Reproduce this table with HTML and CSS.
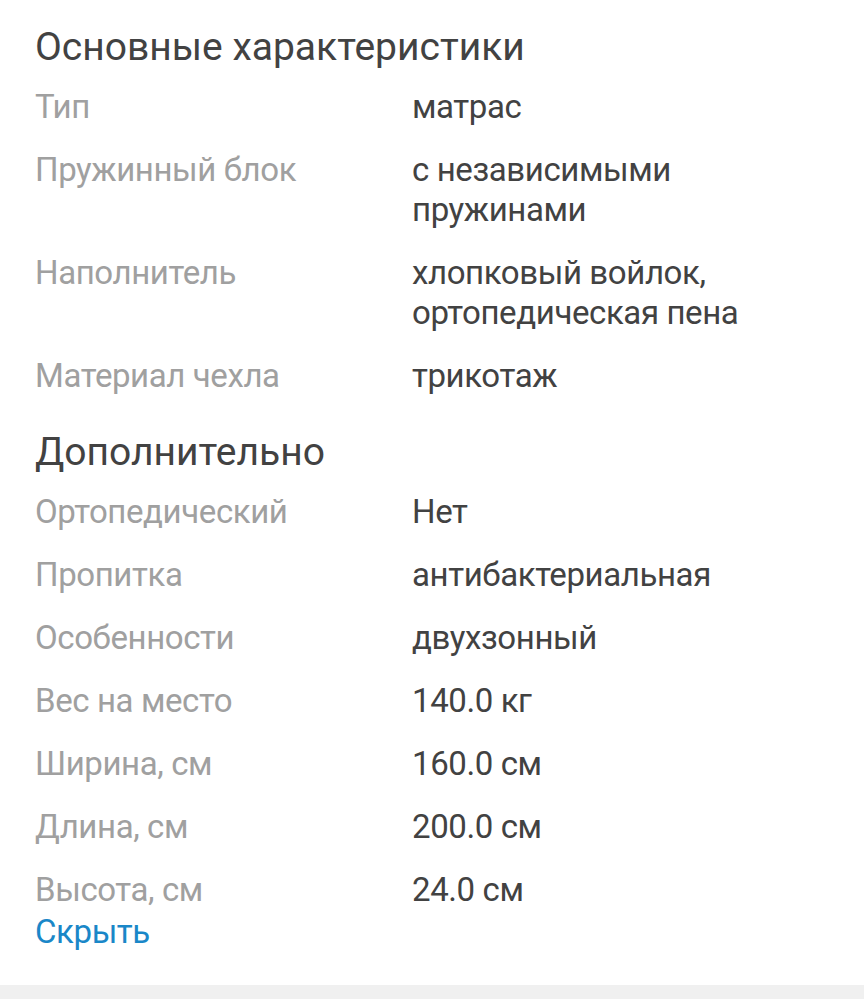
FILE: index.html
```html
<!DOCTYPE html>
<html lang="ru">
<head>
<meta charset="utf-8">
<link rel="stylesheet" href="styles.css">
</head>
<body>
<div class="page">
  <div class="specs">
    <h2 class="title">Основные характеристики</h2>
    <dl class="grid">
      <dt>Тип</dt><dd>матрас</dd>
      <dt>Пружинный блок</dt><dd>с независимыми пружинами</dd>
      <dt>Наполнитель</dt><dd>хлопковый войлок, ортопедическая пена</dd>
      <dt>Материал чехла</dt><dd>трикотаж</dd>
    </dl>
    <h2 class="title second">Дополнительно</h2>
    <dl class="grid">
      <dt>Ортопедический</dt><dd>Нет</dd>
      <dt>Пропитка</dt><dd>антибактериальная</dd>
      <dt>Особенности</dt><dd>двухзонный</dd>
      <dt>Вес на место</dt><dd>140.0 кг</dd>
      <dt>Ширина, см</dt><dd>160.0 см</dd>
      <dt>Длина, см</dt><dd>200.0 см</dd>
      <dt>Высота, см</dt><dd>24.0 см</dd>
    </dl>
    <a class="toggle" href="#">Скрыть</a>
  </div>
  <div class="footer-bar"></div>
</div>
</body>
</html>
```
FILE: styles.css
```css
html, body {
  margin: 0;
  padding: 0;
  background: #ffffff;
}
body {
  font-family: Roboto, "Noto Sans", sans-serif;
  -webkit-font-smoothing: antialiased;
}
.page {
  display: flex;
  flex-direction: column;
  min-height: 999px;
}
.specs {
  padding: 23px 36px 33px 35px;
  display: flex;
  flex-direction: column;
}
.title {
  margin: 0;
  font-size: 39px;
  line-height: 48px;
  font-weight: 400;
  color: #424242;
}
.title.second {
  margin-top: 32px;
}
.grid {
  margin: 16px 0 0 0;
  display: grid;
  grid-template-columns: 377px 1fr;
  row-gap: 23px;
  font-size: 33px;
  line-height: 40px;
  letter-spacing: -0.4px;
}
.grid dt {
  color: #a0a0a0;
}
.grid dd {
  margin: 0;
  color: #424242;
}
.toggle {
  margin-top: 2px;
  font-size: 33px;
  line-height: 40px;
  letter-spacing: -0.4px;
  color: #1a87c8;
  text-decoration: none;
  align-self: flex-start;
}
.footer-bar {
  flex: 1;
  background: #f0f0f0;
}
```
